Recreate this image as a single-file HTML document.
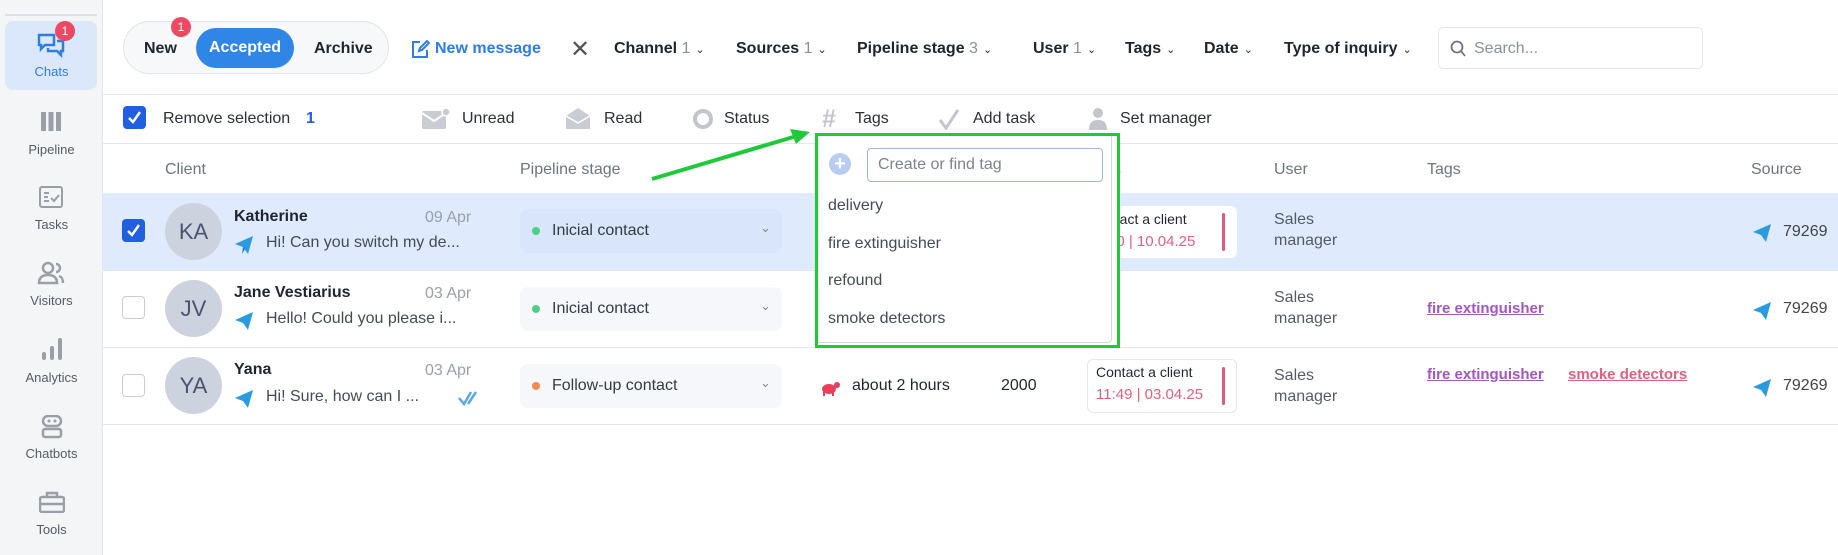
<!DOCTYPE html>
<html><head><meta charset="utf-8"><style>
*{box-sizing:border-box;margin:0;padding:0}
body{width:1838px;height:555px;overflow:hidden;background:#fff;font-family:"Liberation Sans",sans-serif;color:#1f2530;position:relative}
.a{position:absolute;white-space:nowrap}
.side{left:0;top:0;width:103px;height:555px;background:#f4f5f7;border-right:1px solid #e3e6ea}
.sl{position:absolute;left:0;width:103px;text-align:center;font-size:13px;color:#555b66}
.ic{position:absolute;left:36px}
.hl{position:absolute;left:103px;width:1735px;height:1px;background:#e3e6ea}
.f{font-size:16px;font-weight:bold;top:40px}
.f span{font-weight:normal;color:#8a909a}
.f i{font-style:normal;font-weight:normal;font-size:11px;margin-left:5px}
.tb{font-size:16px;top:110px;color:#2a2f38}
.hd{font-size:16px;top:161px;color:#6c7480}
.cb{position:absolute;width:23px;height:23px;border-radius:4px}
.av{position:absolute;width:57px;height:57px;border-radius:50%;background:#ccd2de;color:#4a5470;font-size:22px;text-align:center;line-height:57px}
.nm{font-size:16px;font-weight:bold}
.dt{font-size:16px;color:#9aa0aa}
.msg{font-size:16px;color:#444b55}
.sel{position:absolute;left:520px;width:262px;height:44px;border-radius:8px;background:#f5f7fa;font-size:16px;color:#333a44}
.row-hl{background:#dfeafd}
.tg{font-size:15px;text-decoration:underline;font-weight:bold}
</style></head><body>
<div class="a side"></div>
<div class="a" style="left:5px;top:14px;width:92px;height:2px;background:#dcdfe3"></div>
<div class="a" style="left:5px;top:21px;width:92px;height:69px;background:#dbe8fb;border-radius:8px"></div>
<svg class="ic" style="left:37px;top:32px" width="30" height="26" viewBox="0 0 30 26"><path d="M2 3h15v10H8l-4 4v-4H2z" fill="none" stroke="#2f7de1" stroke-width="2.5"/><path d="M20 9h6v10h-2v4l-4-4h-9v-3" fill="none" stroke="#2f7de1" stroke-width="2.5"/></svg>
<div class="a" style="left:55px;top:21px;width:20px;height:20px;border-radius:50%;background:#ec4a62;color:#fff;font-size:12px;text-align:center;line-height:20px">1</div>
<div class="sl" style="top:64px;color:#2f7de1">Chats</div>
<svg class="ic" style="left:41px;top:112px" width="20" height="19"><rect x="0" y="0" width="5" height="19" fill="#9a9ea6"/><rect x="7.5" y="0" width="5" height="19" fill="#9a9ea6"/><rect x="15" y="0" width="5" height="19" fill="#9a9ea6"/></svg>
<div class="sl" style="top:142px">Pipeline</div>
<svg class="ic" style="left:39px;top:186px" width="24" height="22"><rect x="1" y="1" width="22" height="20" rx="2" fill="none" stroke="#9a9ea6" stroke-width="2"/><path d="M5 7h5M5 11h4M5 15h5M12 12l3 3 5-6" stroke="#9a9ea6" stroke-width="2" fill="none"/></svg>
<div class="sl" style="top:217px">Tasks</div>
<svg class="ic" style="left:37px;top:261px" width="28" height="24"><circle cx="11" cy="7" r="5" fill="none" stroke="#9a9ea6" stroke-width="2.5"/><path d="M2 22c0-6 4-8 9-8s9 2 9 8z" fill="none" stroke="#9a9ea6" stroke-width="2.5"/><path d="M19 3a4 4 0 010 8M22 15c3 1 4 3 4 7" fill="none" stroke="#9a9ea6" stroke-width="2.5"/></svg>
<div class="sl" style="top:293px">Visitors</div>
<svg class="ic" style="left:42px;top:338px" width="20" height="22"><rect x="0" y="14" width="4" height="8" rx="2" fill="#9a9ea6"/><rect x="8" y="8" width="4" height="14" rx="2" fill="#9a9ea6"/><rect x="16" y="0" width="4" height="22" rx="2" fill="#9a9ea6"/></svg>
<div class="sl" style="top:370px">Analytics</div>
<svg class="ic" style="left:41px;top:415px" width="22" height="24"><rect x="2" y="1" width="18" height="10" rx="5" fill="none" stroke="#9a9ea6" stroke-width="2.5"/><circle cx="8" cy="6" r="1.5" fill="#9a9ea6"/><circle cx="14" cy="6" r="1.5" fill="#9a9ea6"/><rect x="2" y="14" width="18" height="8" rx="2" fill="none" stroke="#9a9ea6" stroke-width="2.5"/></svg>
<div class="sl" style="top:446px">Chatbots</div>
<svg class="ic" style="left:39px;top:491px" width="26" height="22"><rect x="1" y="6" width="24" height="15" rx="2" fill="none" stroke="#9a9ea6" stroke-width="2.5"/><path d="M8 6V2h10v4M1 13h24" fill="none" stroke="#9a9ea6" stroke-width="2.5"/></svg>
<div class="sl" style="top:522px">Tools</div>

<!-- top bar -->
<div class="a" style="left:123px;top:21px;width:266px;height:53px;border:1px solid #e1e4e8;border-radius:27px;background:#f7f8fa"></div>
<div class="a" style="left:144px;top:40px;font-size:16px;font-weight:bold">New</div>
<div class="a" style="left:171px;top:17px;width:20px;height:20px;border-radius:50%;background:#ec4a62;color:#fff;font-size:12px;text-align:center;line-height:20px">1</div>
<div class="a" style="left:196px;top:28px;width:98px;height:40px;border-radius:20px;background:#2f86e6;color:#fff;font-size:16px;font-weight:bold;text-align:center;line-height:40px">Accepted</div>
<div class="a" style="left:314px;top:40px;font-size:16px;font-weight:bold">Archive</div>
<svg class="a" style="left:410px;top:39px" width="20" height="20"><path d="M10 3H3v15h14v-7" fill="none" stroke="#2f7de1" stroke-width="2"/><path d="M9 12l1-3 7-7 2 2-7 7z" fill="none" stroke="#2f7de1" stroke-width="2"/></svg>
<div class="a" style="left:435px;top:40px;font-size:16px;font-weight:bold;color:#2f7de1">New message</div>
<div class="a" style="left:570px;top:35px;font-size:24px;color:#555">✕</div>
<div class="a f" style="left:614px">Channel <span>1</span><i>⌄</i></div>
<div class="a f" style="left:736px">Sources <span>1</span><i>⌄</i></div>
<div class="a f" style="left:857px">Pipeline stage <span>3</span><i>⌄</i></div>
<div class="a f" style="left:1033px">User <span>1</span><i>⌄</i></div>
<div class="a f" style="left:1125px">Tags<i>⌄</i></div>
<div class="a f" style="left:1204px">Date<i>⌄</i></div>
<div class="a f" style="left:1284px">Type of inquiry<i>⌄</i></div>
<div class="a" style="left:1438px;top:27px;width:265px;height:42px;border:1px solid #e4e6ea;border-radius:5px"></div>
<svg class="a" style="left:1450px;top:40px" width="16" height="17"><circle cx="7" cy="7" r="5.5" fill="none" stroke="#6c7480" stroke-width="1.8"/><path d="M11 11l4 5" stroke="#6c7480" stroke-width="1.8"/></svg>
<div class="a" style="left:1474px;top:40px;font-size:16px;color:#8a909a">Search...</div>
<div class="hl" style="top:94px"></div>

<!-- toolbar -->
<div class="cb" style="left:123px;top:106px;background:#1f5fe0"></div>
<svg class="a" style="left:127px;top:110px" width="15" height="15"><path d="M2 8l4 4 7-10" fill="none" stroke="#fff" stroke-width="2.5"/></svg>
<div class="a tb" style="left:163px">Remove selection</div>
<div class="a tb" style="left:306px;color:#1f5fe0;font-weight:bold">1</div>
<svg class="a" style="left:422px;top:108px" width="28" height="22"><rect x="0" y="3" width="24" height="18" rx="2" fill="#c9ccd2"/><path d="M0 5l12 8 12-8" fill="none" stroke="#fff" stroke-width="2"/><circle cx="24" cy="4" r="4" fill="#c9ccd2" stroke="#fff" stroke-width="1.5"/></svg>
<div class="a tb" style="left:462px">Unread</div>
<svg class="a" style="left:566px;top:106px" width="24" height="24"><path d="M0 10L12 2l12 8v13H0z" fill="#c9ccd2"/><path d="M0 10l12 7 12-7" fill="none" stroke="#fff" stroke-width="1.5"/></svg>
<div class="a tb" style="left:604px">Read</div>
<svg class="a" style="left:692px;top:108px" width="22" height="22"><circle cx="11" cy="11" r="8" fill="none" stroke="#c2c5cb" stroke-width="4"/></svg>
<div class="a tb" style="left:724px">Status</div>
<div class="a" style="left:822px;top:105px;font-size:25px;color:#c2c5cb;font-weight:bold">#</div>
<div class="a tb" style="left:855px">Tags</div>
<svg class="a" style="left:938px;top:108px" width="22" height="22"><path d="M2 12l6 8 12-18" fill="none" stroke="#c2c5cb" stroke-width="3"/></svg>
<div class="a tb" style="left:973px">Add task</div>
<svg class="a" style="left:1088px;top:107px" width="20" height="23"><circle cx="10" cy="6" r="5" fill="#c2c5cb"/><path d="M1 23c0-8 4-10 9-10s9 2 9 10z" fill="#c2c5cb"/></svg>
<div class="a tb" style="left:1120px">Set manager</div>
<div class="hl" style="top:143px"></div>

<!-- headers -->
<div class="a hd" style="left:165px">Client</div>
<div class="a hd" style="left:520px">Pipeline stage</div>
<div class="a hd" style="left:1105px">ks</div>
<div class="a hd" style="left:1274px">User</div>
<div class="a hd" style="left:1427px">Tags</div>
<div class="a hd" style="left:1751px">Source</div>

<!-- row1 -->
<div class="a row-hl" style="left:103px;top:193px;width:1735px;height:77px"></div>
<div class="hl" style="top:270px"></div>
<div class="cb" style="left:122px;top:219px;background:#1f5fe0"></div>
<svg class="a" style="left:126px;top:223px" width="15" height="15"><path d="M2 8l4 4 7-10" fill="none" stroke="#fff" stroke-width="2.5"/></svg>
<div class="av" style="left:165px;top:203px">KA</div>
<div class="a nm" style="left:234px;top:208px">Katherine</div>
<div class="a dt" style="left:425px;top:209px">09 Apr</div>
<svg class="a" style="left:234px;top:235px" width="20" height="20"><path d="M1 9L19 1 14 19 9 12z" fill="#2b9be0"/><path d="M9 12l-1 7 3-5" fill="#1b7cc0"/></svg>
<div class="a msg" style="left:266px;top:234px">Hi! Can you switch my de...</div>
<div class="sel" style="top:209px;background:#d8e5fa"></div>
<div class="a" style="left:532px;top:227px;width:8px;height:8px;border-radius:50%;background:#4dcf86"></div>
<div class="a" style="left:552px;top:222px;font-size:16px;color:#333a44">Inicial contact</div>
<div class="a" style="left:760px;top:220px;font-size:13px;color:#888">⌄</div>
<div class="a" style="left:1087px;top:206px;width:150px;height:52px;background:#fff;border-radius:6px"></div>
<div class="a" style="left:1108px;top:211px;font-size:14px">ntact a client</div>
<div class="a" style="left:1108px;top:233px;font-size:15px;color:#e0607e">00 | 10.04.25</div>
<div class="a" style="left:1222px;top:213px;width:3px;height:38px;background:#e3597a;border-radius:2px"></div>
<div class="a" style="left:1274px;top:209px;font-size:16px;color:#555b66;line-height:21px">Sales<br>manager</div>
<svg class="a" style="left:1752px;top:223px" width="20" height="20"><path d="M1 9L19 1 14 19 9 12z" fill="#2b9be0"/></svg>
<div class="a" style="left:1783px;top:223px;font-size:16px;color:#444">79269</div>

<!-- row2 -->
<div class="hl" style="top:347px"></div>
<div class="cb" style="left:122px;top:296px;border:1.5px solid #c8ccd3"></div>
<div class="av" style="left:165px;top:280px">JV</div>
<div class="a nm" style="left:234px;top:284px">Jane Vestiarius</div>
<div class="a dt" style="left:425px;top:285px">03 Apr</div>
<svg class="a" style="left:234px;top:311px" width="20" height="20"><path d="M1 9L19 1 14 19 9 12z" fill="#2b9be0"/></svg>
<div class="a msg" style="left:266px;top:310px">Hello! Could you please i...</div>
<div class="sel" style="top:287px"></div>
<div class="a" style="left:532px;top:305px;width:8px;height:8px;border-radius:50%;background:#4dcf86"></div>
<div class="a" style="left:552px;top:300px;font-size:16px;color:#333a44">Inicial contact</div>
<div class="a" style="left:760px;top:298px;font-size:13px;color:#888">⌄</div>
<div class="a" style="left:1274px;top:287px;font-size:16px;color:#555b66;line-height:21px">Sales<br>manager</div>
<div class="a tg" style="left:1427px;top:300px;color:#a355c2">fire extinguisher</div>
<svg class="a" style="left:1752px;top:301px" width="20" height="20"><path d="M1 9L19 1 14 19 9 12z" fill="#2b9be0"/></svg>
<div class="a" style="left:1783px;top:300px;font-size:16px;color:#444">79269</div>

<!-- row3 -->
<div class="hl" style="top:424px"></div>
<div class="cb" style="left:122px;top:374px;border:1.5px solid #c8ccd3"></div>
<div class="av" style="left:165px;top:357px">YA</div>
<div class="a nm" style="left:234px;top:361px">Yana</div>
<div class="a dt" style="left:425px;top:362px">03 Apr</div>
<svg class="a" style="left:234px;top:389px" width="20" height="20"><path d="M1 9L19 1 14 19 9 12z" fill="#2b9be0"/></svg>
<div class="a msg" style="left:266px;top:388px">Hi! Sure, how can I ...</div>
<svg class="a" style="left:458px;top:390px" width="26" height="16"><path d="M1 8l5 6L13 2M10 14L18 2" fill="none" stroke="#5aa9ea" stroke-width="2.5"/></svg>
<div class="sel" style="top:364px"></div>
<div class="a" style="left:532px;top:382px;width:8px;height:8px;border-radius:50%;background:#f58a55"></div>
<div class="a" style="left:552px;top:377px;font-size:16px;color:#333a44">Follow-up contact</div>
<div class="a" style="left:760px;top:375px;font-size:13px;color:#888">⌄</div>
<svg class="a" style="left:820px;top:378px" width="20" height="20"><ellipse cx="9" cy="11" rx="7" ry="5" fill="#e8405c"/><circle cx="17" cy="7" r="3" fill="#e8405c"/><path d="M4 14v4M13 14v4" stroke="#e8405c" stroke-width="2"/></svg>
<div class="a" style="left:852px;top:377px;font-size:16px">about 2 hours</div>
<div class="a" style="left:1001px;top:377px;font-size:16px">2000</div>
<div class="a" style="left:1087px;top:359px;width:150px;height:54px;background:#fff;border:1px solid #e6e8ec;border-radius:6px"></div>
<div class="a" style="left:1096px;top:364px;font-size:14px">Contact a client</div>
<div class="a" style="left:1096px;top:386px;font-size:15px;color:#e0607e">11:49 | 03.04.25</div>
<div class="a" style="left:1222px;top:367px;width:3px;height:38px;background:#e3597a;border-radius:2px"></div>
<div class="a" style="left:1274px;top:365px;font-size:16px;color:#555b66;line-height:21px">Sales<br>manager</div>
<div class="a tg" style="left:1427px;top:366px;color:#a355c2">fire extinguisher</div>
<div class="a tg" style="left:1568px;top:366px;color:#e0607e">smoke detectors</div>
<svg class="a" style="left:1752px;top:378px" width="20" height="20"><path d="M1 9L19 1 14 19 9 12z" fill="#2b9be0"/></svg>
<div class="a" style="left:1783px;top:377px;font-size:16px;color:#444">79269</div>

<!-- dropdown -->
<div class="a" style="left:815px;top:133px;width:305px;height:215px;background:#fff;border:3px solid #1fc93a"></div>
<div class="a" style="left:818px;top:136px;width:294px;height:207px;border:1px solid #d5d8dd;border-top:none;border-left:none;border-radius:0 0 4px 0"></div>
<div class="a" style="left:829px;top:153px;width:22px;height:22px;border-radius:50%;background:#b9cdf2;color:#fff;font-size:20px;text-align:center;line-height:22px;font-weight:bold">+</div>
<div class="a" style="left:867px;top:148px;width:236px;height:34px;border:1px solid #9fb6dd;border-radius:4px"></div>
<div class="a" style="left:878px;top:156px;font-size:16px;color:#7d838d">Create or find tag</div>
<div class="a" style="left:828px;top:197px;font-size:16px;color:#444b55">delivery</div>
<div class="a" style="left:828px;top:235px;font-size:16px;color:#444b55">fire extinguisher</div>
<div class="a" style="left:828px;top:272px;font-size:16px;color:#444b55">refound</div>
<div class="a" style="left:828px;top:310px;font-size:16px;color:#444b55">smoke detectors</div>

<!-- arrow -->
<svg class="a" style="left:640px;top:120px" width="180" height="70"><path d="M12 59L160 15" stroke="#1fc93a" stroke-width="4"/><path d="M170 12l-20-3 6 15z" fill="#1fc93a"/></svg>
</body></html>
